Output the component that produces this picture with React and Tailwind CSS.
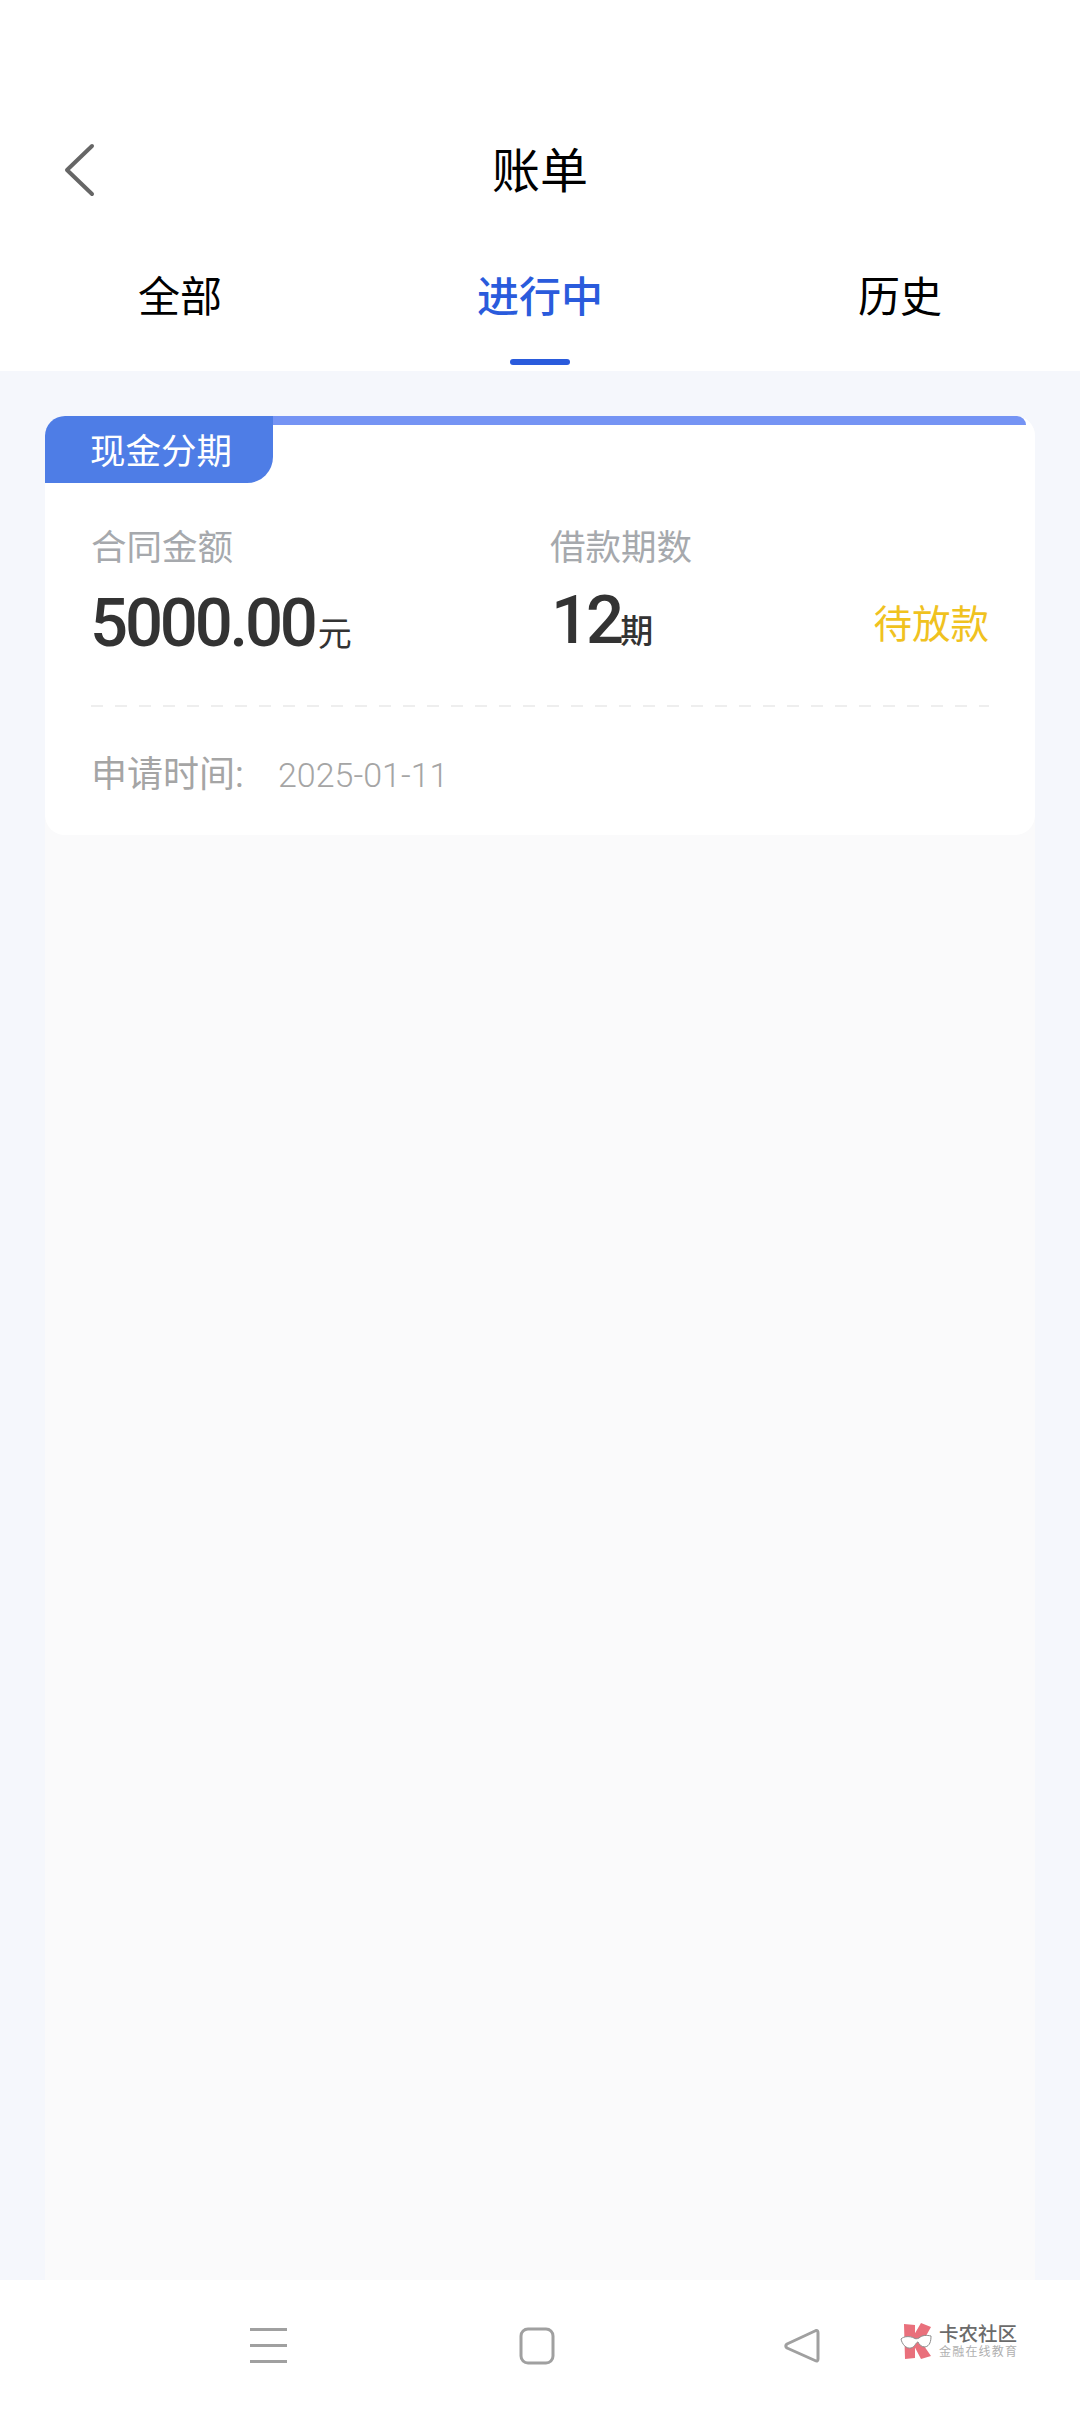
const cjk = "font-['Roboto','Noto_Sans_CJK_SC',sans-serif]";

function Logo() {
  return (
    <div className="absolute left-[900px] top-[43px] flex items-center gap-[3px]">
      <svg width="36" height="37" viewBox="0 0 36 37">
        <path d="M4 1 L15 2 L15 35 L5 36 Z" fill="#e9707c" />
        <path d="M21 0 L31 4 L22 20 L31 33 L21 36 L11 17 Z" fill="#e9707c" />
        <path d="M1 16 C4 13 10 13 14 15 C15 16 17 16 19 15 C22 12 27 12 31 13 C31 18 30 23 25 24 C21 24 19 21 18 19 C16 19 15 24 11 25 C6 26 2 21 1 16 Z" fill="#ffffff" stroke="#8c8c8c" strokeWidth="1" />
      </svg>
      <div className="flex flex-col">
        <span className="text-[19.5px] leading-[21px] font-medium text-[#6b6b6b] whitespace-nowrap">卡农社区</span>
        <span className="text-[12px] leading-[15px] tracking-[1.2px] text-[#b0b0b0] whitespace-nowrap">金融在线教育</span>
      </div>
    </div>
  );
}

export default function App() {
  return (
    <div className={`${cjk} w-[1080px] h-[2412px] flex flex-col bg-[#f5f7fc]`}>
      <header className="h-[371px] bg-white flex flex-col">
        <div className="h-[136px] shrink-0" />
        <div className="h-[68px] shrink-0 flex items-center justify-center relative">
          <svg className="absolute left-[62px] top-[7px]" width="34" height="54" viewBox="0 0 34 54" fill="none">
            <path d="M30 3 L5 27 L30 51" stroke="#666666" strokeWidth="4" strokeLinecap="round" strokeLinejoin="round" />
          </svg>
          <span className="text-[48px] leading-[68px] pt-[4px] text-black">账单</span>
        </div>
        <div className="grid grid-cols-3 mt-[64px]">
          <div className="text-center text-[42px] leading-[60px] text-black">全部</div>
          <div className="flex flex-col items-center">
            <span className="text-[42px] leading-[60px] font-medium text-[#2a5bdc]">进行中</span>
            <span className="mt-[31px] w-[60px] h-[6px] rounded-full bg-[#2a5bdc]" />
          </div>
          <div className="text-center text-[42px] leading-[60px] text-black">历史</div>
        </div>
      </header>

      <main className="flex-1 flex flex-col px-[45px] pt-[45px]">
        <div className="flex-1 bg-[#fafafb] rounded-t-[20px]">
          <section className="h-[419px] bg-white rounded-[20px] flex flex-col">
            <div className="flex items-start">
              <div className="w-[228px] h-[67px] rounded-tl-[20px] rounded-br-[26px] bg-[#4e7de6] pl-[45px] pt-[5px] text-[35.5px] leading-[62px] text-white">现金分期</div>
              <div className="flex-1 h-[9px] mr-[9px] rounded-tr-[12px] bg-[#7594f4]" />
            </div>
            <div className="flex px-[46px] pt-[40px]">
              <div className="w-[459px]">
                <div className="text-[35.5px] leading-[50px] text-[#a6a9ad]">合同金额</div>
                <div className="mt-[17px] h-[66px] leading-[66px] text-[#333333] whitespace-nowrap">
                  <span className="text-[67px] font-medium tracking-[-3.2px] -ml-[1px]">5000.00</span>
                  <span className="text-[34px] ml-[3px]">元</span>
                </div>
              </div>
              <div className="flex-1">
                <div className="text-[35.5px] leading-[50px] text-[#a6a9ad]">借款期数</div>
                <div className="mt-[14px] h-[66px] leading-[66px] text-[#333333] whitespace-nowrap">
                  <span className="text-[67px] font-medium tracking-[-3px] ml-[1px]">12</span>
                  <span className="text-[33px] font-medium -ml-[1px]">期</span>
                </div>
              </div>
              <div className="text-[38.5px] leading-[56px] mt-[74px] text-[#f0c21f] whitespace-nowrap">待放款</div>
            </div>
            <div className="mx-[46px] mt-[49px] h-[2px] bg-[repeating-linear-gradient(90deg,#eeeeee_0,#eeeeee_12px,transparent_12px,transparent_24px)]" />
            <div className="flex items-center pl-[46px] mt-[43px] h-[50px] text-[#a5a5a5]">
              <span className="text-[36px] w-[189px] whitespace-nowrap">申请时间:</span>
              <span className="text-[34px] font-light -ml-[2px]">2025-01-11</span>
            </div>
          </section>
        </div>
      </main>

      <nav className="h-[132px] shrink-0 bg-white relative flex items-center">
        <div className="w-full flex items-center pl-[250px]">
          <svg width="37" height="38" viewBox="0 0 37 38" className="shrink-0">
            <path d="M0 2.5h37M0 18.5h37M0 34.5h37" stroke="#a0a0a0" strokeWidth="3" />
          </svg>
          <svg width="36" height="38" viewBox="0 0 36 38" fill="none" className="ml-[232px] shrink-0">
            <rect x="2" y="2" width="32" height="34" rx="7" stroke="#a0a0a0" strokeWidth="3" />
          </svg>
          <svg width="38" height="38" viewBox="0 0 38 38" fill="none" className="ml-[228px] shrink-0">
            <path d="M33 3.5 Q35 3 35 6 V32 Q35 35 32 33.5 L4 21 Q1.5 19 4 17 Z" stroke="#a0a0a0" strokeWidth="3" strokeLinejoin="round" />
          </svg>
        </div>
        <Logo />
      </nav>
    </div>
  );
}
